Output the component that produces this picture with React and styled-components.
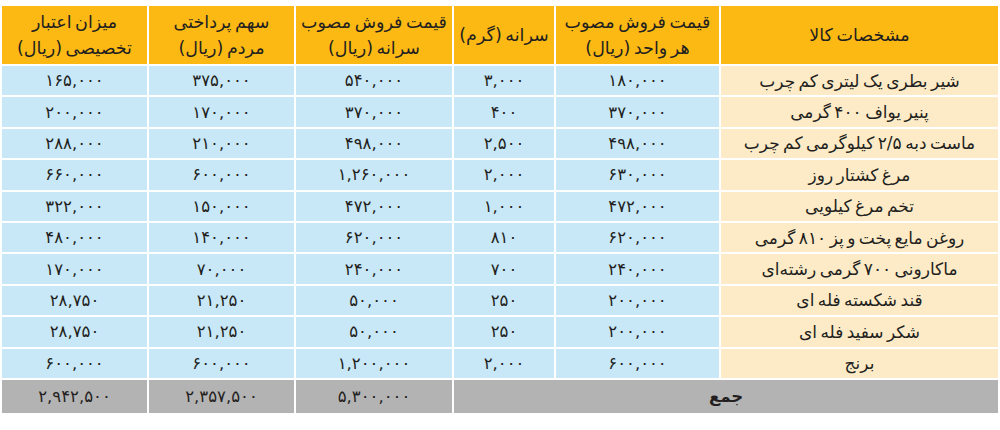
import React from 'react';
import styled, { createGlobalStyle } from 'styled-components';

const GlobalStyle = createGlobalStyle`
  body {
    margin: 0;
    background: #ffffff;
    font-family: 'DejaVu Sans', 'Noto Sans', sans-serif;
  }
`;

const Page = styled.div`
  width: 1000px;
  height: 430px;
  padding: 6px 2px 0;
  box-sizing: border-box;
  background: #ffffff;
`;

const Table = styled.div`
  direction: rtl;
  display: grid;
  grid-template-columns: 277px 163px 100px 156px 145px 145px;
  grid-template-rows: 58px repeat(10, 29.4px) 33px;
  column-gap: 2px;
  row-gap: 2px;
  color: #231f20;
`;

const HeadCell = styled.div`
  background: #fdb913;
  display: flex;
  align-items: center;
  justify-content: center;
  text-align: center;
  font-size: 17.5px;
  line-height: 26px;
  word-spacing: -2px;
  white-space: pre;
`;

const Cell = styled.div`
  background: ${(props) => (props.$name ? '#fdebc8' : '#c8e8f8')};
  display: flex;
  align-items: center;
  justify-content: center;
  font-size: ${(props) => (props.$name ? '17px' : '16.5px')};
  letter-spacing: ${(props) => (props.$name ? '0' : '1.5px')};
  word-spacing: ${(props) => (props.$name ? '-2px' : '0')};
  white-space: nowrap;
`;

const TotalCell = styled.div`
  background: #b3b3b3;
  display: flex;
  align-items: center;
  justify-content: center;
  font-size: 16.5px;
  letter-spacing: 1.5px;
  grid-column: ${(props) => (props.$wide ? 'span 3' : 'auto')};
  font-weight: ${(props) => (props.$wide ? 'bold' : 'normal')};
`;

const headers = [
  'مشخصات کالا',
  'قیمت فروش مصوب\nهر واحد (ریال)',
  'سرانه (گرم)',
  'قیمت فروش مصوب\nسرانه (ریال)',
  'سهم پرداختی\nمردم (ریال)',
  'میزان اعتبار\nتخصیصی (ریال)',
];

const rows = [
  ['شیر بطری یک لیتری کم چرب', '۱۸۰,۰۰۰', '۳,۰۰۰', '۵۴۰,۰۰۰', '۳۷۵,۰۰۰', '۱۶۵,۰۰۰'],
  ['پنیر یواف ۴۰۰ گرمی', '۳۷۰,۰۰۰', '۴۰۰', '۳۷۰,۰۰۰', '۱۷۰,۰۰۰', '۲۰۰,۰۰۰'],
  ['ماست دبه ۲/۵ کیلوگرمی کم چرب', '۴۹۸,۰۰۰', '۲,۵۰۰', '۴۹۸,۰۰۰', '۲۱۰,۰۰۰', '۲۸۸,۰۰۰'],
  ['مرغ کشتار روز', '۶۳۰,۰۰۰', '۲,۰۰۰', '۱,۲۶۰,۰۰۰', '۶۰۰,۰۰۰', '۶۶۰,۰۰۰'],
  ['تخم مرغ کیلویی', '۴۷۲,۰۰۰', '۱,۰۰۰', '۴۷۲,۰۰۰', '۱۵۰,۰۰۰', '۳۲۲,۰۰۰'],
  ['روغن مایع پخت و پز ۸۱۰ گرمی', '۶۲۰,۰۰۰', '۸۱۰', '۶۲۰,۰۰۰', '۱۴۰,۰۰۰', '۴۸۰,۰۰۰'],
  ['ماکارونی ۷۰۰ گرمی رشته‌ای', '۲۴۰,۰۰۰', '۷۰۰', '۲۴۰,۰۰۰', '۷۰,۰۰۰', '۱۷۰,۰۰۰'],
  ['قند شکسته فله ای', '۲۰۰,۰۰۰', '۲۵۰', '۵۰,۰۰۰', '۲۱,۲۵۰', '۲۸,۷۵۰'],
  ['شکر سفید فله ای', '۲۰۰,۰۰۰', '۲۵۰', '۵۰,۰۰۰', '۲۱,۲۵۰', '۲۸,۷۵۰'],
  ['برنج', '۶۰۰,۰۰۰', '۲,۰۰۰', '۱,۲۰۰,۰۰۰', '۶۰۰,۰۰۰', '۶۰۰,۰۰۰'],
];

const totals = ['۵,۳۰۰,۰۰۰', '۲,۳۵۷,۵۰۰', '۲,۹۴۲,۵۰۰'];

export default function App() {
  return (
    <Page>
      <GlobalStyle />
      <Table>
        {headers.map((h) => (
          <HeadCell key={h}>{h}</HeadCell>
        ))}
        {rows.map((row, i) =>
          row.map((value, j) => (
            <Cell key={`${i}-${j}`} $name={j === 0}>
              {value}
            </Cell>
          ))
        )}
        <TotalCell $wide>جمع</TotalCell>
        {totals.map((t) => (
          <TotalCell key={t}>{t}</TotalCell>
        ))}
      </Table>
    </Page>
  );
}
